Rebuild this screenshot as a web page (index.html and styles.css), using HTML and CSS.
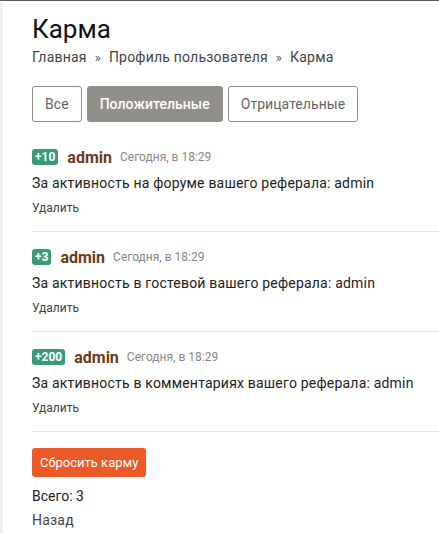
FILE: index.html
```html
<!DOCTYPE html>
<html lang="ru">
<head>
<meta charset="utf-8">
<title>Карма</title>
<link rel="stylesheet" href="styles.css">
</head>
<body>
<div class="page">
  <h1 class="title">Карма</h1>
  <div class="crumbs">
    <a href="#">Главная</a><span class="sep">»</span><a href="#">Профиль пользователя</a><span class="sep">»</span><span>Карма</span>
  </div>
  <div class="tabs">
    <a class="tab" href="#">Все</a>
    <a class="tab tab-active" href="#">Положительные</a>
    <a class="tab" href="#">Отрицательные</a>
  </div>
  <div class="list">
    <div class="item">
      <div class="head"><span class="badge">+10</span><a class="name" href="#">admin</a><span class="time">Сегодня, в 18:29</span></div>
      <div class="text">За активность на форуме вашего реферала: admin</div>
      <a class="del" href="#">Удалить</a>
    </div>
    <div class="item">
      <div class="head"><span class="badge">+3</span><a class="name" href="#">admin</a><span class="time">Сегодня, в 18:29</span></div>
      <div class="text">За активность в гостевой вашего реферала: admin</div>
      <a class="del" href="#">Удалить</a>
    </div>
    <div class="item">
      <div class="head"><span class="badge">+200</span><a class="name" href="#">admin</a><span class="time">Сегодня, в 18:29</span></div>
      <div class="text">За активность в комментариях вашего реферала: admin</div>
      <a class="del" href="#">Удалить</a>
    </div>
  </div>
  <button class="reset" type="button">Сбросить карму</button>
  <div class="total">Всего: 3</div>
  <a class="back" href="#">Назад</a>
</div>
</body>
</html>
```
FILE: styles.css
```css
html, body {
  margin: 0;
  padding: 0;
  background: #fff;
}
body {
  font-family: Roboto, "Liberation Sans", sans-serif;
  color: #222;
  border-top: 1px solid #5a5a5a;
  min-height: 532px;
}
a { text-decoration: none; color: inherit; }
.page {
  border-left: 3px solid #f0f0ee;
  padding: 12px 0 0 29px;
  min-height: 520px;
}
.title {
  margin: 0;
  font-size: 26px;
  font-weight: 400;
  line-height: 32px;
  color: #111;
}
.crumbs {
  margin-top: 2px;
  font-size: 14px;
  line-height: 20px;
  letter-spacing: 0.2px;
  color: #444;
}
.sep {
  margin: 0 8px;
  color: #555;
  font-size: 13px;
}
.tabs {
  display: flex;
  gap: 5px;
  margin-top: 18px;
}
.tab {
  display: flex;
  align-items: center;
  height: 36px;
  box-sizing: border-box;
  padding: 0 12px;
  border: 1px solid #8c8c8c;
  border-radius: 3px;
  font-size: 14px;
  letter-spacing: 0.05px;
  color: #666;
}
.tab-active {
  background: #928f8a;
  border-color: #928f8a;
  color: #fff;
  font-weight: 500;
}
.list { margin-top: 10px; }
.item {
  padding: 15px 0;
  border-bottom: 1px solid #e2e2e2;
}
.head {
  display: flex;
  align-items: center;
  height: 20px;
}
.badge {
  display: inline-block;
  background: #389a78;
  color: #fff;
  font-size: 12px;
  font-weight: 700;
  line-height: 16px;
  padding: 0 3px;
  border-radius: 3px;
  margin-right: 9px;
}
.name {
  font-size: 16px;
  font-weight: 700;
  color: #6b3a1c;
  margin-right: 8px;
}
.time {
  font-size: 12px;
  color: #888;
}
.text {
  margin-top: 6px;
  font-size: 14px;
  line-height: 20px;
  letter-spacing: 0.2px;
  color: #222;
}
.del {
  display: block;
  margin-top: 7px;
  font-size: 12px;
  line-height: 16px;
  color: #444;
}
.reset {
  display: block;
  margin-top: 16px;
  height: 29px;
  padding: 0 8px;
  border: none;
  border-radius: 3px;
  background: #ec5a27;
  color: #fff;
  font-family: Roboto, "Liberation Sans", sans-serif;
  font-size: 13px;
}
.total {
  margin-top: 7px;
  font-size: 14px;
  line-height: 24px;
  color: #222;
}
.back {
  display: block;
  font-size: 14px;
  line-height: 24px;
  letter-spacing: 0.2px;
  color: #444;
}
```
